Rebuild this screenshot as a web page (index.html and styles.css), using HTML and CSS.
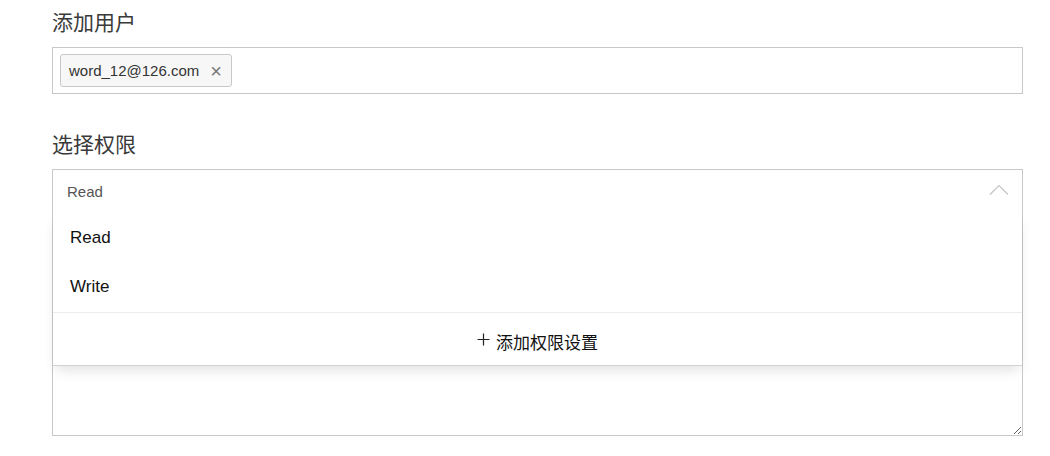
FILE: index.html
```html
<!DOCTYPE html>
<html lang="zh-CN">
<head>
    <meta charset="UTF-8">
    <meta name="viewport" content="width=device-width, initial-scale=1.0">
    <title>添加用户</title>
    <link rel="stylesheet" href="styles.css">
</head>
<body>
    <div class="form">
        <div class="form-group">
            <label class="field-label">添加用户</label>
            <div class="tag-input">
                <span class="tag">word_12@126.com <span class="tag-close">&times;</span></span>
            </div>
        </div>
        <div class="form-group">
            <label class="field-label">选择权限</label>
            <div class="select-box">
                <div class="select-head">
                    <span class="select-value">Read</span>
                    <svg class="chevron" width="20" height="12" viewBox="0 0 20 12">
                        <polyline points="1,10.5 10,1.5 19,10.5" fill="none" stroke="#c4c4c4" stroke-width="1.2"/>
                    </svg>
                </div>
                <textarea class="select-note"></textarea>
                <div class="dropdown">
                    <ul class="options">
                        <li>Read</li>
                        <li>Write</li>
                    </ul>
                    <div class="dropdown-foot">
                        <svg width="13" height="13" viewBox="0 0 13 13">
                            <path d="M6.5 0.5v12M0.5 6.5h12" stroke="#222" stroke-width="1.2"/>
                        </svg>
                        <span>添加权限设置</span>
                    </div>
                </div>
            </div>
        </div>
    </div>
</body>
</html>
```

FILE: styles.css
```css
body {
    margin: 0;
    background-color: #fff;
    font-family: 'Liberation Sans', 'Noto Sans CJK SC', sans-serif;
    color: #333;
}
.form {
    padding: 7px 0 0 52px;
    width: 971px;
}
.form-group {
    margin-bottom: 35px;
}
.field-label {
    display: block;
    font-family: 'Noto Sans CJK SC', sans-serif;
    font-size: 21px;
    line-height: 28px;
    color: #3a3a3a;
    margin-bottom: 12px;
}
.tag-input {
    border: 1px solid #c8c8c8;
    padding: 6px 0 0 7px;
    box-sizing: border-box;
    height: 47px;
}
.tag {
    display: inline-flex;
    align-items: center;
    height: 33px;
    box-sizing: border-box;
    padding: 0 9px 0 8px;
    border: 1px solid #c8c8c8;
    border-radius: 3px;
    background-color: #f7f7f7;
    font-size: 15px;
    color: #333;
}
.tag-close {
    margin-left: 11px;
    font-size: 20px;
    color: #777;
    line-height: 1;
}
.select-box {
    position: relative;
    border: 1px solid #c8c8c8;
    height: 267px;
    box-sizing: border-box;
    display: flex;
    flex-direction: column;
}
.select-head {
    height: 43px;
    display: flex;
    align-items: center;
    justify-content: space-between;
    padding: 0 13px 0 14px;
    flex-shrink: 0;
}
.select-value {
    font-size: 15px;
    color: #555;
}
.chevron {
    margin-top: -3px;
}
.select-note {
    flex: 1;
    border: none;
    outline: none;
    resize: vertical;
    display: block;
    width: 100%;
    box-sizing: border-box;
}
.dropdown {
    position: absolute;
    top: 43px;
    left: 0;
    right: 0;
    background-color: #fff;
    border-bottom: 1px solid #d2d2d2;
    box-shadow: 0 7px 12px -3px rgba(0, 0, 0, 0.12);
}
.options {
    list-style: none;
    margin: 0;
    padding: 0 0 1px;
    border-bottom: 1px solid #ececec;
}
.options li {
    height: 49px;
    line-height: 49px;
    padding-left: 17px;
    font-size: 17px;
    color: #111;
}
.dropdown-foot {
    height: 52px;
    display: flex;
    align-items: center;
    justify-content: center;
    gap: 6px;
    font-size: 17px;
    color: #111;
}
.dropdown-foot span {
    font-family: 'Noto Sans CJK SC', sans-serif;
    margin-top: 4px;
}
```
